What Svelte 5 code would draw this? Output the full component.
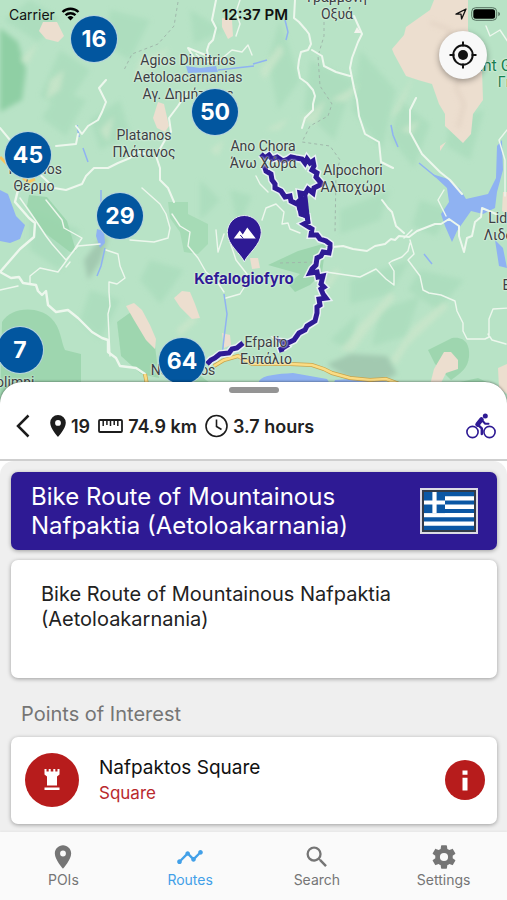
<script>
  const clusters = [
    { n: 16, x: 94, y: 39 },
    { n: 50, x: 215, y: 112 },
    { n: 45, x: 28, y: 155 },
    { n: 29, x: 120, y: 216 },
    { n: 7, x: 20, y: 350 },
    { n: 64, x: 182, y: 361 }
  ];

  const places = [
    { lines: ['Γραμμένη', 'Οξυά'], x: 337, y: -11 },
    { lines: ['Agios Dimitrios', 'Aetoloacarnanias', 'Αγ. Δημήτριος'], x: 188, y: 52 },
    { lines: ['Platanos', 'Πλάτανος'], x: 144, y: 127 },
    { lines: ['Thermos', 'Θέρμο'], x: 34, y: 161 },
    { lines: ['Ano Chora', 'Άνω Χώρα'], x: 263, y: 138 },
    { lines: ['Alpochori', 'Αλποχώρι'], x: 353, y: 162 },
    { lines: ['Lidoriki', 'Λιδορίκι'], x: 511, y: 210 },
    { lines: ['Efpalio', 'Ευπάλιο'], x: 266, y: 334 },
    { lines: ['Nafpaktos'], x: 183, y: 362 },
    { lines: ['Etolimni'], x: 9, y: 374 },
    { lines: ['Efpalio'], x: 524, y: 277 }
  ];

  const tabs = ['POIs', 'Routes', 'Search', 'Settings'];
  let active = $state('Routes');
  const pct = (x) => `${(x / 507) * 100}%`;
</script>

<div class="app">
  <section class="map" aria-label="Map">
    <svg class="terrain" viewBox="0 0 507 402" preserveAspectRatio="xMidYMid slice" aria-hidden="true">
      <defs>
        <filter id="soft"><feGaussianBlur stdDeviation="2.500" /></filter>
        <filter id="edge"><feGaussianBlur stdDeviation=".7" /></filter>
      </defs>
      <rect width="507" height="402" fill="#b8e3c6" />
      <g filter="url(#soft)" fill="#a6dab9" opacity=".6">
        <path d="M30 0l30 18-22 24-34-22zM60 50l30 20-26 40-24-14zM110 10l40 10-20 40-24-14zM190 10l34 20-30 14zM280 20l20 60-22 30-10-50zM310 60l44 20-20 60-30-30zM360 50l36 40-14 60-30-40zM400 100l30 24-16 44-24-30z" />
        <path d="M90 120l30-20 10 34-30 16zM60 90l26 10-20 36-24-18zM340 210l50-20-10 30-40 14zM420 200l30 10-14 26-24-10zM350 280l60-20-20 34-40 10zM420 270l44 10-26 30-30-20zM150 260l34 10-24 34-20-24zM200 180l20 20-20 20zM380 310l40-14-14 40-34 10zM450 120l34-10-14 50-24-14z" />
        <path d="M30 210l50 20-20 40-30-20zM90 290l30 10-20 40-20-20zM230 190l22 6-14 30zM330 340l28-26-8 36z" />
      </g>
      <path d="M0 28l18 14 8 28-4 30-22 12z" fill="#8fcfa4" filter="url(#soft)" />
      <g filter="url(#soft)" fill="#cbe6cb" opacity=".8">
        <path d="M140 60l30-12-16 20-20 10zM50 80l14-10-4 20-14 10zM100 130l14-14-6 26zM260 70l20-26 4 8-20 28zM265 130l24-12-10 12zM330 100l30-16-14 18zM300 120l26-20-10 24zM340 350l30-34 6 4-24 32zM355 330l36-38 4 6-30 36zM390 360l24-34 30-24 4 5-40 38-12 20zM416 70l-16 40-10 8zM400 130l20-10-8 14zM210 150l14-10-6 16zM176 330l16-14 6 4-18 16zM20 60l18-18-10 22zM320 290l16-22 4 4-14 20z" />
      </g>
      <g fill="#98d4aa" opacity=".8" filter="url(#edge)">
        <path d="M29 195l18 2 20 24 9 30-6 1-25-19-18-27z" />
        <path d="M2 322c8-15 36-17 49-4 10 9 10 24 14 32l16 4 0 48H0z" />
        <path d="M117 322l14-10 24 34 4 32-18-4-20-18z" />
        <path d="M168 202l20 0 0 12 20 10 0 20-10 10-14-2-4-20-10-14z" opacity=".7" />
        <path d="M268 265l30-14 28-8-4 30-12 12-15 7-7-8 12-10z" />
        <path d="M428 350l24-12c14-2 18 8 17 19-1 11-8 16-18 23l-16-16z" />
        <path d="M178 382l20-8 16 12-30 16zM442 386l36-8 22 10 7 16h-60z" />
      </g>
      <path d="M84 260l20-26 4 4-8 24-12 18zM327 364l24-10 36 2 10 18-20 10-30-6z" fill="#a2c9b0" filter="url(#soft)" />
      <g fill="#ecdecf" filter="url(#edge)">
        <path d="M434 0l34 0 0 30 14 40 1 30-10 14-2 20-8 9-18-17 0-12-6-10-7-20-14-4-12-4-12-22-2-5 12-14 2-8 24-17z" />
        <path d="M43 22l14 0 7 14-6 6-12-3-7-8zM222 18l10 2 1 16-5 3-6-12zM158 102l6 2 5 22-4 6-8-4-4-10zM174 298l8-7 8 1 5 12 5 14-8 1-12-12zM126 306l8-3 8 7 8 15 6 14-1 10-9-9-12-20zM222 333l8 2 1 10-7 3zM444 352l7 0 7 8 0 9-12 4-8 16-8-4 4-16zM498 368l9-4v30l-8-6zM250 258l8 0 2 10-8 1zM503 192l4 0v22l-5-3zM440 146l6-4-6 9z" />
      </g>
      <path d="M430 22l20 8-6 24 20 12-8 22 8 16-6 24" fill="none" stroke="#dfcfc0" stroke-width="4" opacity=".6" filter="url(#soft)" />
      <g fill="#8fb2f2">
        <path d="M0 190l8 4 8 22 9 9-5 14-10 4-10-2z" />
        <path d="M432 174l16 5 12 10 6 10 22-5 8-16 1-32 5-6 1 30-6 22-2 16-12 6-12-3-14 20-5 11-7-16-4-12 8-12-2-14z" />
        <path d="M186 66l14 2 16-2 2 6-30 1zM97 229l7 2 1 12-5 5-4-12zM495 240l8 8 4 20-8-2z" />
        <path d="M259 381c4-6 18-7 34-8l34 6 14 23h-80zM335 380l30-2 24 4v14h-60z" />
      </g>
      <g fill="none" stroke="#8fb2f2" stroke-width="1.500">
        <path d="M77 125l2 12M83 148l5 14M101 190l0 40M105 248l-4 18-4 10M391 125l2 10 5 12M419 163l17 14M285 20l3 12-2 8M253 64l14-4M424 254l8 10M224 294l3 20-3 24-2 18M218 70l36-4" />
      </g>
      <g fill="none" stroke="#a0b8ab" stroke-width="1" stroke-dasharray="3 3">
        <path d="M178 2l-4 24-16 18-26 10-8 16M324 22l0 14-6 20 2 30 12 18-4 12-18 10-8 16 28 4 10 14-4 14-1 60M280 263l36-1" />
      </g>
      <g fill="none" stroke="#edf7ed" stroke-linejoin="round" stroke-linecap="round">
        <path stroke-width="2" d="M216 0l-2 10-2 10 4 8-3 12-4 4-2 6 1 6-10-4-10-4 6 10 0 6M186 94l-8 12-9 12 2 14-6 8-9 16 4 12 0 12 8 8 6 14M295 0l-1 18 5 4 7 8 3 4 2 10-3 6-7 2-2 8-1 8 2 10 7 5 6 7 2 6-2 8 0 6-8 8-3 10M312 50l10 6 2 10 12 6 14 4M354 16l8 18-4 8-6 16-2 10 4 20 3 12 2 16 6 18 14 8 2 20 12 6M416 98l-6 12 0 22 12 22 18 18 10 8 12 14" />
        <path stroke-width="2" d="M0 128l10 12 12 18 24 22 8 8 12 2 16-6 4-8 8-8 14 0 10-5 12-5 8-6 8 2M106 80l-7 8 7 14-4 10-4 8-10 6-6 8-6-8M78 134l-2 10-20 2" />
        <path stroke-width="2.400" d="M18 190l-3 12 14 16 6 5-1 14-14 12-20 23 11 6 8-1 4 6 13 2 2 6 4 4 4-4 2 14 8 7 12-2 10 8 14 14 10 6 6 2 0 12 8 6 4 8 16 2 9 6" />
        <path stroke-width="1.400" d="M46 200l8 10 8 10 2 8 18 10-8 12-10 14-6 8-18-4-10 8 0 8M20 198l14 20 12 18 6 8 14 16 12-14 22-2M106 250l12 4 2 12 5 12-8 6-8-2 0 10 1 14-2 8 2 42M130 240l24 2 14-4 2-10-4-14-6-10-18-16M172 214l8 12 10 6-2 14 10 12 8 14 10 8 8 12M224 234l-6 18-2-22M228 236l8 24 14 18-10 16-14 4" />
        <path stroke-width="2" d="M333 247l10-1 10 3 14 2 8-5 10-2 6-5 4 1 4-4 10 1 8-6 18-7 6 0 8-5 10 7 0 10 5 16 3-14 5-2 3-14 6-5 1-9 14 6M382 200l6 8 4 4 4 14 8 7" />
        <path stroke-width="1.400" d="M326 272l34 5 16-8 10 10 8 6 0-14-5-8 3-2 10-4 6-6 2-8M410 240l4 14-6 6 6 8 6 8 3 14 6 3 12 2 14 6 2 10 6 12 0 8 4 8 18 0 4-2 0-18 4-10 16-1M488 334l4 6 14 4M507 130l-8 10 6 20 0 36M240 0l-4 12 4 12-4 12M262 220l4-12 10-4 8 8-2 12 6-1 2 6 10 4M0 290l18-4M444 190l-6 10 8 16M486 26l4 10 10-6 8 12" />
        <path stroke-width="1.400" d="M196 54l10 8 14-2 12-10 10 2 6-7 4 10M256 176l4 8 8 8M66 267l4-5M404 238l8-8" />
      </g>
      <path d="M145 374l3 16M214 366l10-6 14-4 14 8 12 0 26 0 22 1 12 4 8 4 18 5 20 2 16-1 16 6" fill="none" stroke="#c9a44c" stroke-width="4" />
      <path d="M145 374l3 16M214 366l10-6 14-4 14 8 12 0 26 0 22 1 12 4 8 4 18 5 20 2 16-1 16 6" fill="none" stroke="#fbdc84" stroke-width="2.600" />
      <path d="M0 157l8 8M23 178l6 4 6-3" stroke="#f8c660" stroke-width="3" fill="none" />
      <g fill="none" stroke-linejoin="miter">
        {#each [['#e9f0f4', 8], ['#2e1a94', 5]] as [color, width]}
          <path stroke={color} stroke-width={width} d="M261 154l4 4 4-3 3 4 5-2 6 4 5-2 3-2 5 1 6 1 3 4 2-4 3 4 3-2 1 5-2 4 5 3-1 4 6 7-8 4-1 5-5-4-3 5-5-1 1 6-3 3 2 8M264 165l2 6 5 3 1 6 3 4 0 4 6 3 4 6 5-1 1 5 6 3 3-4 3 3" />
          <path stroke={color} stroke-width={width} d="M302 198l-3 6 2 10 6 2 1 6-4 2 8 5-1 6 6 0 3 4 6 2 4 3 0 4-1 5-6-1-2 4-4 2-1 7-4 4-2 4 7-1 1 5 5-1-2 8 3 3-3 2 2 5 3 4-7 1 1 6-3 2 0 6-2 8-8 5-2 4-6 3-5 7-6 3-6-1 4 4-5 3 1 3M207 364l4-4 4-2 5-4 9-1 3-4 5-1 6-5" />
        {/each}
      </g>
      <path d="M300 200l7-8 3 28-10-4z" fill="#2e1a94" />
      <path d="M354 33l3-6 4 6z" fill="#f3f3ee" />
    </svg>

    {#each places as place}
      <div class="place" style:left={pct(place.x)} style:top="{place.y}px">
        {#each place.lines as line}<span>{line}</span>{/each}
      </div>
    {/each}
    <div class="place park" style:left={pct(521)} style:top="57px"><span>Mount Giona Forest</span><span class="local">Γκιώνα</span></div>

    {#each clusters as c}
      <button class="cluster" style:left={pct(c.x)} style:top="{c.y}px">{c.n}</button>
    {/each}

    <button class="poi" style:left={pct(244)} style:top="215px">
      <svg width="36" height="48" viewBox="0 0 36 48" aria-hidden="true">
        <path d="M18 47C15 39 1 30 1 17.500a17 17 0 0 1 34 0C35 30 21 39 18 47z" fill="#2e1a94" stroke="#e4edf0" />
        <path d="M7.500 23.500l6-8 3 4 4.500-7 8.500 11z" fill="#fff" />
        <path d="M14 20l3 3.500" stroke="#2e1a94" />
      </svg>
      <span>Kefalogiofyro</span>
    </button>

    <div class="status">
      <span class="carrier">Carrier
        <svg width="19" height="14" viewBox="0 0 19 14" aria-hidden="true">
          <path d="M1.500 5a11.500 11.500 0 0 1 16 0M4.500 8.200a7.400 7.400 0 0 1 10 0" fill="none" stroke="#000" stroke-width="2.400" />
          <path d="M6.500 10.400a4.400 4.400 0 0 1 6 0l-3 3.200z" />
        </svg>
      </span>
      <time>12:37 PM</time>
      <span class="power">
        <svg width="12" height="12" viewBox="0 0 12 12" aria-hidden="true">
          <path d="M1 6.200L11 1 6.600 11 6 6.200z" fill="none" stroke="#111" stroke-width="1.300" stroke-linejoin="round" />
        </svg>
        <svg width="30" height="14" viewBox="0 0 30 14" aria-hidden="true">
          <rect x=".7" y=".7" width="25" height="12.600" rx="4" fill="none" stroke="#54705f" />
          <rect x="2.300" y="2.300" width="21.800" height="9.400" rx="2.500" />
          <path d="M27.300 4.800v4.400q1.700-.7 1.700-2.200t-1.700-2.200z" fill="#54705f" />
        </svg>
      </span>
    </div>

    <button class="locate" aria-label="My location">
      <svg width="28" height="28" viewBox="0 0 28 28" aria-hidden="true">
        <circle cx="14" cy="14" r="9.700" fill="none" stroke="#111" stroke-width="2" />
        <circle cx="14" cy="14" r="5" fill="#111" />
        <path d="M14 .5v5M14 22.500v5M.5 14h5M22.500 14h5" stroke="#111" stroke-width="2" />
      </svg>
    </button>
  </section>

  <main class="sheet">
    <header>
      <span class="grip"></span>
      <div class="facts">
        <button class="back" aria-label="Back">
          <svg width="14" height="24" viewBox="0 0 14 24" aria-hidden="true"><path d="M12.500 1.500L2 12l10.500 10.500" fill="none" stroke="#1c1c1c" stroke-width="2.500" /></svg>
        </button>
        <span class="fact">
          <svg width="16" height="22" viewBox="0 0 16 22" aria-hidden="true"><path fill="#1c1c1c" fill-rule="evenodd" d="M8 0a7.800 7.800 0 0 0-7.800 7.800C.2 13.500 8 22 8 22s7.800-8.500 7.800-14.200A7.800 7.800 0 0 0 8 0zm0 5a2.900 2.900 0 1 1 0 5.800A2.900 2.900 0 0 1 8 5z" /></svg>
          19
        </span>
        <span class="fact">
          <svg width="25" height="14" viewBox="0 0 25 14" aria-hidden="true"><rect x="1" y="1" width="23" height="12" rx="1" fill="none" stroke="#1c1c1c" stroke-width="1.800" /><path d="M5.200 1v6M8.900 1v5M12.500 1v6M16.200 1v5M19.800 1v6" stroke="#1c1c1c" stroke-width="1.500" /></svg>
          74.9 km
        </span>
        <span class="fact">
          <svg width="23" height="24" viewBox="0 0 23 24" aria-hidden="true"><circle cx="11.500" cy="12" r="10.500" fill="none" stroke="#1c1c1c" stroke-width="1.600" /><path d="M11.500 5.500V12.500l5 3" fill="none" stroke="#1c1c1c" stroke-width="1.600" /></svg>
          3.7 hours
        </span>
        <svg class="bike" width="30" height="26" viewBox="0 0 30 26" role="img" aria-label="Cycling">
          <g fill="none" stroke="#2e1a94" stroke-linejoin="round" stroke-linecap="round">
            <circle cx="6.500" cy="19" r="5.600" stroke-width="1.600" />
            <circle cx="23.500" cy="19" r="5.600" stroke-width="1.600" />
            <path d="M15.500 6.500l-4 5" stroke-width="4.500" />
            <path d="M11.500 11.500l4.300 3.800V21" stroke-width="2.400" />
            <path d="M16.200 7.500l3 3.200h3.300" stroke-width="2" />
          </g>
          <circle cx="19.300" cy="3" r="2.500" fill="#2e1a94" />
        </svg>
      </div>
    </header>

    <div class="content">
      <div class="card title">
        <h1>Bike Route of Mountainous Nafpaktia (Aetoloakarnania)</h1>
        <svg width="58" height="46" viewBox="0 0 58 46" role="img" aria-label="Greek flag">
          <rect width="58" height="46" fill="#dcdae4" />
          <rect x="2" y="2" width="54" height="42" fill="#333b48" />
          <rect x="4" y="4" width="50" height="38" fill="#fff" />
          <path d="M4 6.100h50M4 14.500h50M4 23h50M4 31.400h50M4 39.900h50" stroke="#0b57a4" stroke-width="4.200" />
          <rect x="4" y="4" width="21" height="21.100" fill="#0b57a4" />
          <path d="M14.500 4v21.100M4 14.500h21" stroke="#fff" stroke-width="4.200" />
        </svg>
      </div>
      <div class="card about"><p>Bike Route of Mountainous Nafpaktia (Aetoloakarnania)</p></div>
      <h2>Points of Interest</h2>
      <article class="card stop">
        <span class="badge">
          <svg width="16" height="22" viewBox="0 0 16 22" aria-hidden="true"><path fill="#fff" d="M.5 0h2v2.500h2.200V0h2v2.500h2.600V0h2v2.500h2.200V0h2v5.500l-2.500 2V16.500H3V7.500l-2.500-2zM.5 18.500h15v2.500H.5z" /></svg>
        </span>
        <div class="text">
          <h3>Nafpaktos Square</h3>
          <p>Square</p>
        </div>
        <button class="info" aria-label="Information">
          <svg width="40" height="40" viewBox="0 0 40 40" aria-hidden="true"><circle cx="20" cy="20" r="20" fill="#b71c1c" /><path d="M17.500 10.500h5v4.300h-5zM17.500 17.800h5V30.500h-5z" fill="#fff" /></svg>
        </button>
      </article>
    </div>
  </main>

  <nav>
    {#each tabs as tab}
      <button class="tab" class:active={active === tab} onclick={() => (active = tab)}>
        <svg width="28" height="28" viewBox="0 0 24 24" fill="currentColor" aria-hidden="true">
          {#if tab === 'POIs'}
            <path d="M12 2C8.130 2 5 5.130 5 9c0 5.250 7 13 7 13s7-7.750 7-13c0-3.870-3.130-7-7-7zm0 9.500a2.500 2.500 0 0 1 0-5 2.500 2.500 0 0 1 0 5z" />
          {:else if tab === 'Routes'}
            <path d="M23 8c0 1.100-.9 2-2 2-.18 0-.35-.02-.51-.07l-3.560 3.550c.05.16.07.34.07.52 0 1.100-.9 2-2 2s-2-.9-2-2c0-.18.02-.36.07-.52l-2.550-2.550c-.16.05-.34.07-.52.07s-.36-.02-.52-.07l-4.550 4.560c.05.16.07.33.07.51 0 1.100-.9 2-2 2s-2-.9-2-2 .9-2 2-2c.18 0 .35.02.51.07l4.560-4.550C8.020 9.360 8 9.180 8 9c0-1.100.9-2 2-2s2 .9 2 2c0 .18-.02.36-.07.52l2.550 2.550c.16-.05.34-.07.52-.07s.36.02.52.07l3.550-3.560C19.020 8.350 19 8.180 19 8c0-1.100.9-2 2-2s2 .9 2 2z" />
          {:else if tab === 'Search'}
            <path d="M15.500 14h-.79l-.28-.27A6.471 6.471 0 0 0 16 9.500 6.500 6.500 0 1 0 9.500 16c1.610 0 3.090-.59 4.230-1.570l.27.28v.79l5 4.990L20.490 19l-4.990-5zm-6 0C7.010 14 5 11.990 5 9.500S7.010 5 9.500 5 14 7.010 14 9.500 11.990 14 9.500 14z" />
          {:else}
            <path d="M19.430 12.980c.04-.32.07-.64.07-.98s-.03-.66-.07-.98l2.110-1.650c.19-.15.24-.42.12-.64l-2-3.460c-.12-.22-.39-.3-.61-.22l-2.490 1c-.52-.4-1.080-.73-1.690-.98l-.38-2.650A.488.488 0 0 0 14 2h-4c-.25 0-.46.18-.49.42l-.38 2.650c-.61.25-1.170.59-1.690.98l-2.490-1c-.23-.09-.49 0-.61.22l-2 3.460c-.13.22-.07.49.12.64l2.110 1.650c-.04.32-.07.65-.07.98s.03.66.07.98l-2.110 1.650c-.19.15-.24.42-.12.64l2 3.460c.12.22.39.3.61.22l2.490-1c.52.4 1.080.73 1.690.98l.38 2.650c.03.24.24.42.49.42h4c.25 0 .46-.18.49-.42l.38-2.650c.61-.25 1.170-.59 1.690-.98l2.490 1c.23.09.49 0 .61-.22l2-3.460c.12-.22.07-.49-.12-.64l-2.110-1.650zM12 15.500a3.500 3.500 0 1 1 0-7 3.500 3.500 0 0 1 0 7z" />
          {/if}
        </svg>
        <span>{tab}</span>
      </button>
    {/each}
  </nav>
</div>

<style>
  .app {
    display: flex;
    flex-direction: column;
    min-height: 100vh;
    overflow: hidden;
    font-family: Inter, 'Liberation Sans', sans-serif;
    color: #222;
    background: #efefef;
  }
  button {
    border: 0;
    padding: 0;
    background: none;
    font: inherit;
    color: inherit;
    cursor: pointer;
  }
  svg { display: block; flex: none; }
  h1, h2, h3, p { margin: 0; font-weight: 400; }

  .map {
    position: relative;
    height: 402px;
    overflow: hidden;
  }
  .terrain { width: 100%; height: 100%; }
  .place {
    position: absolute;
    transform: translateX(-50%);
    display: flex;
    flex-direction: column;
    align-items: center;
    font-family: Roboto, 'Noto Sans', sans-serif;
    font-size: 14px;
    line-height: 17px;
    white-space: nowrap;
    color: #3c4043;
    text-shadow: 0 0 2px #e6f4ea, 0 0 2px #e6f4ea;
  }
  .park { font-size: 16px; color: #188050; }
  .local { font-size: 14px; }
  .cluster {
    position: absolute;
    transform: translate(-50%, -50%);
    width: 46px;
    height: 46px;
    border-radius: 50%;
    background: #02569f;
    color: #fff;
    font-size: 23px;
    font-weight: 700;
    line-height: 46px;
    box-shadow: 0 0 0 1px #b5d3dc;
  }
  .poi {
    position: absolute;
    transform: translateX(-50%);
    display: flex;
    flex-direction: column;
    align-items: center;
    gap: 7px;
    color: #2e1a94;
    font-size: 15px;
    font-weight: 700;
    line-height: 18px;
    text-shadow: 0 0 2px #e6f4ea, 0 0 2px #e6f4ea;
  }
  .status {
    position: absolute;
    inset: 0 0 auto 0;
    display: grid;
    grid-template-columns: 1fr auto 1fr;
    align-items: center;
    height: 28px;
    padding: 0 6px 0 9px;
    font-size: 14px;
    color: #111;
  }
  .carrier, .power { display: flex; align-items: center; gap: 6px; }
  .power { justify-content: flex-end; gap: 4px; }
  time { font-size: 15px; font-weight: 600; }
  .locate {
    position: absolute;
    top: 31px;
    right: 20px;
    width: 48px;
    height: 48px;
    border-radius: 50%;
    background: #f8f8f8;
    display: grid;
    place-items: center;
    box-shadow: 0 2px 6px rgba(0, 0, 0, .35);
  }

  .sheet {
    position: relative;
    flex: 1;
    margin-top: -20px;
    border-radius: 22px 22px 0 0;
    background: #fff;
    box-shadow: 0 0 3px rgba(0, 0, 0, .6);
  }
  header {
    display: flex;
    flex-direction: column;
    align-items: center;
    padding-top: 5px;
    border-bottom: 2px solid #cfcfcf;
  }
  .grip { width: 50px; height: 6px; border-radius: 3px; background: #949494; }
  .facts {
    align-self: stretch;
    display: flex;
    align-items: center;
    gap: 8px;
    height: 66px;
    padding: 0 11px 0 16px;
    font-size: 18px;
    font-weight: 600;
  }
  .back { margin-right: 12px; }
  .fact { display: flex; align-items: center; gap: 5px; white-space: nowrap; }
  .bike { margin-left: auto; }

  .content {
    display: flex;
    flex-direction: column;
    padding: 11px 10px 8px 11px;
    border-radius: 14px 14px 0 0;
    background: #efefef;
  }
  .card {
    border-radius: 7px;
    background: #fff;
    box-shadow: 0 1px 4px rgba(0, 0, 0, .35);
  }
  .title {
    display: flex;
    align-items: center;
    justify-content: space-between;
    gap: 24px;
    padding: 10px 19px 10px 20px;
    background: #2e1a94;
    color: #fff;
  }
  h1 { font-size: 24px; line-height: 29px; }
  .about {
    margin-top: 10px;
    padding: 22px 30px 46px;
    font-size: 20px;
    line-height: 25px;
  }
  h2 {
    margin: 24px 10px 10px;
    font-size: 20px;
    line-height: 25px;
    color: #757575;
  }
  .stop {
    display: flex;
    align-items: center;
    gap: 20px;
    padding: 16px 12px 17px 14px;
  }
  .badge {
    display: grid;
    place-items: center;
    width: 54px;
    height: 54px;
    border-radius: 50%;
    background: #b71c1c;
  }
  .text { flex: 1; }
  h3 { font-size: 19px; line-height: 26px; color: #111; }
  .text p { font-size: 17px; line-height: 24px; color: #b9292d; }

  nav {
    position: relative;
    display: flex;
    height: 68px;
    background: #fafafa;
    box-shadow: 0 -1px 2px rgba(0, 0, 0, .04);
  }
  .tab {
    flex: 1;
    display: flex;
    flex-direction: column;
    align-items: center;
    padding-top: 11px;
    color: #757575;
    font-size: 14px;
    line-height: 18px;
  }
  .active { color: #42a0e8; }
</style>
